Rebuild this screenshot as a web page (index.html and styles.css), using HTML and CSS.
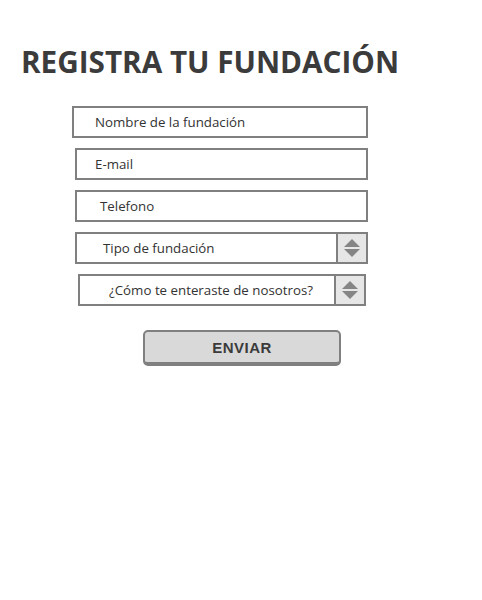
FILE: index.html
```html
<!DOCTYPE html>
<html lang="es">
<head>
<meta charset="utf-8">
<title>Registra tu fundación</title>
<link rel="stylesheet" href="styles.css">
</head>
<body>
<main class="page">
  <h1 class="title">REGISTRA TU FUNDACIÓN</h1>
  <form class="form">
    <div class="field field--name"><span class="field__text">Nombre de la fundación</span></div>
    <div class="field field--email"><span class="field__text">E-mail</span></div>
    <div class="field field--phone"><span class="field__text">Telefono</span></div>
    <div class="field select select--type">
      <span class="field__text">Tipo de fundación</span>
      <span class="select__arrows">
        <svg width="16" height="19" viewBox="0 0 16 19"><polygon points="8,0 16,8 0,8" fill="#858585"/><polygon points="0,10 16,10 8,18" fill="#858585"/></svg>
      </span>
    </div>
    <div class="field select select--source">
      <span class="field__text">¿Cómo te enteraste de nosotros?</span>
      <span class="select__arrows">
        <svg width="16" height="19" viewBox="0 0 16 19"><polygon points="8,0 16,8 0,8" fill="#858585"/><polygon points="0,10 16,10 8,18" fill="#858585"/></svg>
      </span>
    </div>
    <button type="button" class="submit">ENVIAR</button>
  </form>
</main>
</body>
</html>
```

FILE: styles.css
```css
html, body {
  margin: 0;
  padding: 0;
  background: #ffffff;
}

.page {
  padding-top: 42px;
  font-family: "Open Sans", "Noto Sans", sans-serif;
  color: #333333;
}

.title {
  margin: 0 0 0 21px;
  font-family: "Open Sans", sans-serif;
  font-weight: 700;
  font-size: 29.7px;
  line-height: 40px;
  color: #3b3b3b;
  letter-spacing: 0;
}

.form {
  display: flex;
  flex-direction: column;
  align-items: flex-start;
  gap: 10px;
  margin-top: 24px;
}

.field {
  box-sizing: border-box;
  height: 32px;
  border: 2px solid #808080;
  background: #ffffff;
  display: flex;
  align-items: center;
}

.field__text {
  font-size: 13.3px;
  line-height: 16px;
  color: #333333;
  white-space: nowrap;
  margin-top: -1px;
}

.field--name { margin-left: 72px; width: 296px; padding-left: 21px; }
.field--email { margin-left: 75px; width: 293px; padding-left: 18px; }
.field--phone { margin-left: 75px; width: 293px; padding-left: 23px; }

.select { justify-content: space-between; }
.select--type { margin-left: 75px; width: 293px; padding-left: 26px; }
.select--source { margin-left: 78px; width: 288px; padding-left: 29px; }

.select__arrows {
  box-sizing: border-box;
  width: 30px;
  height: 100%;
  border-left: 2px solid #808080;
  background: #e6e6e6;
  display: flex;
  align-items: center;
  justify-content: center;
}

.select__arrows svg { display: block; }

.submit {
  box-sizing: border-box;
  margin: 14px 0 0 143px;
  width: 198px;
  height: 36px;
  border: 2px solid #808080;
  border-bottom-width: 4px;
  border-radius: 5px;
  background: #d9d9d9;
  font-family: "Liberation Sans", Arial, sans-serif;
  font-weight: 700;
  font-size: 15px;
  color: #3b3b3b;
  letter-spacing: 0.5px;
  padding: 0;
}
```
